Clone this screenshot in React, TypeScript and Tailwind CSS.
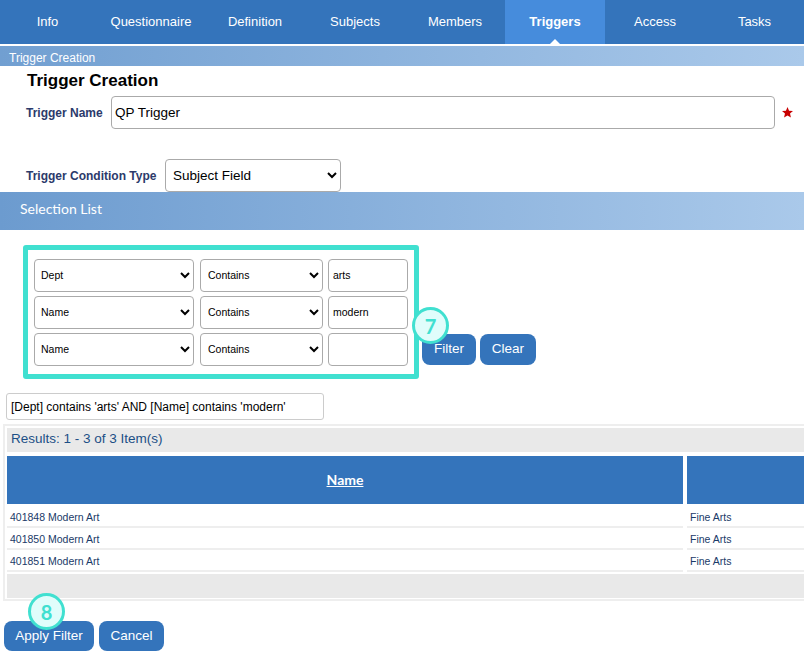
import React from 'react';

const tabs = [
  { label: 'Info', w: 'w-[95px]' },
  { label: 'Questionnaire', w: 'w-[112px]' },
  { label: 'Definition', w: 'w-[96px]' },
  { label: 'Subjects', w: 'w-[104px]' },
  { label: 'Members', w: 'w-[98px]', shift: '-translate-x-px' },
  { label: 'Triggers', w: 'w-[100px]', active: true },
  { label: 'Access', w: 'w-[100px]' },
  { label: 'Tasks', w: 'w-[99px]' },
];

const filters = [
  { field: 'Dept', value: 'arts' },
  { field: 'Name', value: 'modern' },
  { field: 'Name', value: '' },
];

const rows = ['401848 Modern Art', '401850 Modern Art', '401851 Modern Art'];

const Badge = ({ n, className }: { n: number; className: string }) => (
  <div
    className={`absolute w-[37px] h-[37px] rounded-full bg-[#e0fdfb] border-[3px] border-[#40e0d0] text-[#40e0d0] flex items-center justify-center text-[20px] font-bold font-['Lato',sans-serif] ${className}`}
  >
    {n}
  </div>
);

const fieldSelect = "h-[33px] bg-white border border-[#aaa] rounded-[4px] text-[10.5px] text-black pb-[2px]";

export default function App() {
  return (
    <div className="w-[804px] h-[663px] overflow-hidden bg-white relative font-['Liberation_Sans',Arial,sans-serif]">
      {/* Tabs */}
      <nav className="flex h-[44px] bg-[#3474bb] text-white text-[13px]">
        {tabs.map((t) => (
          <div
            key={t.label}
            className={`${t.w} relative flex items-center justify-center ${t.active ? 'bg-[#468cdc] font-bold' : ''}`}
          >
            <span className={t.shift}>{t.label}</span>
            {t.active && (
              <span className="absolute bottom-0 left-1/2 -ml-[5px] w-0 h-0 border-x-[5px] border-x-transparent border-b-[5px] border-b-white" />
            )}
          </div>
        ))}
      </nav>

      <div className="mt-[2px] h-[20px] bg-gradient-to-r from-[#719fd1] to-[#aac9ea] text-white text-[12px] leading-[25px] pl-[9px]">
        Trigger Creation
      </div>

      {/* Form */}
      <h1 className="ml-[27px] mt-[5px] h-[20px] text-[17px] leading-[20px] font-bold text-black">
        Trigger Creation
      </h1>
      <div className="mt-[5px] flex items-center h-[33px]">
        <label className="ml-[26px] w-[85px] text-[12px] font-bold text-[#2c3a6b]">Trigger Name</label>
        <input
          readOnly
          value="QP Trigger"
          className="w-[664px] h-[33px] border border-[#aaa] rounded-[4px] px-[3px] text-[13.5px] text-black"
        />
        <svg viewBox="0 0 24 24" className="ml-[7px] w-[11px] h-[11px]">
          <path fill="#c80000" d="M12 0l3.4 8 8.6.7-6.5 5.6 2 8.5L12 18.3 4.500 22.800l2-8.500L0 8.700 8.600 8z" />
        </svg>
      </div>
      <div className="mt-[30px] flex items-center h-[33px]">
        <label className="ml-[26px] w-[139px] text-[12px] font-bold text-[#2c3a6b]">Trigger Condition Type</label>
        <select className="w-[176px] h-[33px] bg-white border border-[#aaa] rounded-[4px] pl-[3px] text-[13.5px] text-black">
          <option>Subject Field</option>
        </select>
      </div>

      <div className="h-[38px] bg-gradient-to-r from-[#6c9bcf] to-[#aac9ea] text-white text-[14px] font-['Lato',sans-serif] leading-[34px] pl-[20px]">
        Selection List
      </div>

      {/* Filter block */}
      <div className="flex items-end mt-[15px] ml-[23px]">
        <div className="w-[396px] h-[134px] border-[5px] border-[#40e0d0] rounded-[3px] pl-[6px] pt-[9px] flex flex-col gap-[4px]">
          {filters.map((f, i) => (
            <div key={i} className="flex">
              <select className={`${fieldSelect} w-[160px] pl-[2px]`}>
                <option>{f.field}</option>
              </select>
              <select className={`${fieldSelect} w-[123px] ml-[6px] pl-[3px]`}>
                <option>Contains</option>
              </select>
              <input
                readOnly
                value={f.value}
                className="w-[80px] h-[33px] ml-[5px] border border-[#aaa] rounded-[4px] px-[4px] pb-[2px] text-[10.5px] text-black"
              />
            </div>
          ))}
        </div>
        <div className="flex gap-[4px] ml-[3px] mb-[14px] text-white text-[13.5px]">
          <button className="w-[54px] h-[31px] bg-[#3474bb] rounded-[8px]">Filter</button>
          <button className="w-[56px] h-[31px] bg-[#3474bb] rounded-[8px]">Clear</button>
        </div>
      </div>

      <input
        readOnly
        value="[Dept] contains 'arts' AND [Name] contains 'modern'"
        className="block mt-[14px] ml-[6px] w-[318px] h-[27px] border border-[#ccc] rounded-[3px] px-[4px] text-[12px] text-black"
      />

      {/* Results */}
      <div className="mt-[4px] ml-[3px] h-[177px] border-y-2 border-l-2 border-[#eee] pl-[2px] pt-[2px]">
        <div className="h-[24px] bg-[#e9e9e9] text-[13.5px] text-[#1c4f86] leading-[21px] pl-[4px]">
          Results: 1 - 3 of 3 Item(s)
        </div>
        <div className="flex gap-[4px] mt-[4px] h-[48px] text-white">
          <div className="w-[676px] bg-[#3474bb] flex items-center justify-center text-[14px] font-bold underline font-['Lato',sans-serif] pb-[2px]">
            Name
          </div>
          <div className="flex-1 bg-[#3474bb]" />
        </div>
        <div className="mt-[2px]">
          {rows.map((r) => (
            <div key={r} className="flex gap-[4px] h-[22px] text-[10.5px] leading-[23px] text-[#1a3a68]">
              <div className="w-[676px] pl-[3px] border-b-2 border-[#eee]">{r}</div>
              <div className="flex-1 pl-[3px] border-b-2 border-[#eee]">Fine Arts</div>
            </div>
          ))}
        </div>
        <div className="mt-[2px] h-[24px] bg-[#e9e9e9]" />
      </div>

      <div className="flex gap-[5px] mt-[20px] ml-[4px] text-white text-[13.5px]">
        <button className="w-[90px] h-[30px] bg-[#3474bb] rounded-[8px]">Apply Filter</button>
        <button className="w-[65px] h-[30px] bg-[#3474bb] rounded-[8px]">Cancel</button>
      </div>

      <Badge n={7} className="left-[412px] top-[307px]" />
      <Badge n={8} className="left-[28px] top-[593px]" />
    </div>
  );
}
